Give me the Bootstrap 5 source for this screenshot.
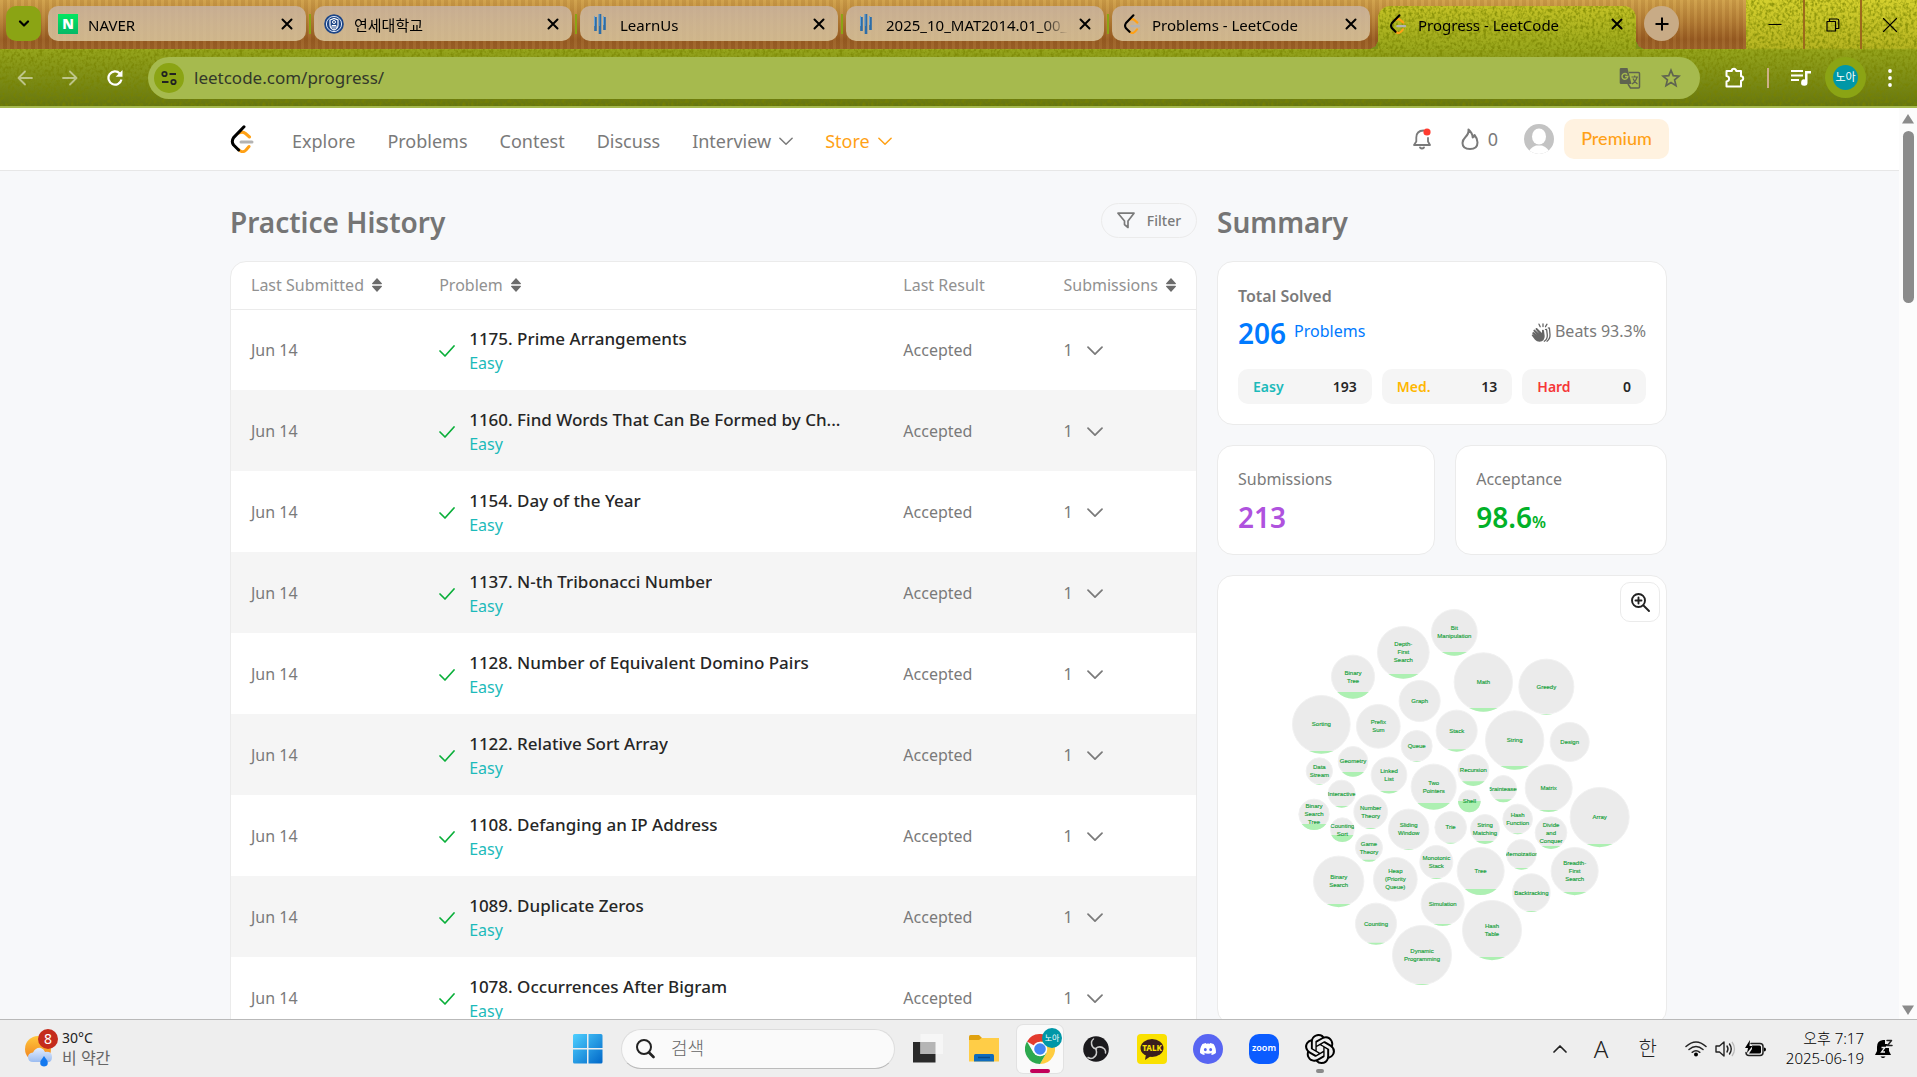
<!DOCTYPE html>
<html lang="en">
<head>
<meta charset="utf-8">
<meta name="viewport" content="width=device-width, initial-scale=1">
<title>Progress - LeetCode</title>
<link href="https://cdn.jsdelivr.net/npm/bootstrap@5.3.0/dist/css/bootstrap.min.css" rel="stylesheet">
<style>
  :root { --ui: "Noto Sans", "Noto Sans CJK KR", sans-serif; --olive: #8ba414; --lime: #a6ba4e; --gray: #7a7a7a; --line: #ebebeb;
    --grain: url("data:image/svg+xml,%3Csvg xmlns='http://www.w3.org/2000/svg' width='200' height='106'%3E%3Cfilter id='n'%3E%3CfeTurbulence type='fractalNoise' baseFrequency='.35 .3' numOctaves='2' stitchTiles='stitch'/%3E%3CfeColorMatrix values='0 0 0 0 .18 0 0 0 0 .22 0 0 0 0 0 0 0 0 -3 1.75'/%3E%3C/filter%3E%3Crect width='200' height='106' filter='url(%23n)' opacity='.7'/%3E%3C/svg%3E"); }
  body { font-family: var(--ui); font-size: 16px; line-height: 25px; font-weight: 400; color: var(--gray); background: #f7f8fa; }
  svg { display: block; flex: none; }
  button { font: inherit; color: inherit; background: none; border: 0; padding: 0; }
  a { color: inherit; text-decoration: none; }
  .ln { fill: none; stroke: currentColor; stroke-linecap: round; stroke-linejoin: round; }

  /* browser frame */
  .frame { height: 108px; color: #000; border-bottom: 2px solid var(--lime);
    background: var(--grain), linear-gradient(#d4d02e, #b6b422 48px, #95a41c 50px, #66760f 106px); }
  .strip { height: 49px; }
  .wood { padding: 6px 58px 0 6px; gap: 7px; background: repeating-linear-gradient(90deg, rgba(255,230,160,.06) 0 3px, rgba(80,30,0,.07) 3px 7px), linear-gradient(#cfa04a, #b37c34 45%, #985c22 80%, #9d6229); }
  .tab-btn { width: 35px; height: 35px; border-radius: 10px; background: var(--olive); }
  .tabs { gap: 8px; min-width: 0; }
  .b-tab { position: relative; flex: 0 1 258px; min-width: 0; height: 35px; gap: 10px; padding: 0 12px 0 10px; border-radius: 10px; line-height: 22px; background: linear-gradient(rgba(200,178,160,.85), rgba(222,205,165,.8)); }
  .b-tab:not(.on)::after { content: ""; position: absolute; right: -5px; top: 8px; width: 2px; height: 20px; background: var(--olive); }
  .b-tab:nth-child(5)::after { display: none; }
  .b-tab span { flex: 1; min-width: 0; white-space: nowrap; overflow: hidden; padding-top: 3px; font-size: 15px; -webkit-mask: linear-gradient(90deg, #000 85%, transparent); mask: linear-gradient(90deg, #000 85%, transparent); }
  .b-tab.on { height: 43px; padding-bottom: 8px; border-radius: 12px 12px 0 0; background: var(--grain), linear-gradient(#c4c226, #98a61c); }
  .b-tab.on::before, .b-tab.on::after { content: ""; position: absolute; bottom: 0; width: 10px; height: 10px; }
  .b-tab.on::before { left: -10px; background: radial-gradient(circle at 0 0, transparent 10px, #7e8e18 10px); }
  .b-tab.on::after { right: -10px; background: radial-gradient(circle at 100% 0, transparent 10px, #7e8e18 10px); }
  .plus-btn { width: 35px; height: 35px; border-radius: 50%; background: #c8ab86; }
  .win-btn { width: 57px; height: 49px; border-left: 2px solid #9c6a1c; }
  .win-btn:first-child { border-left: 0; }
  .favicon-n { width: 20px; height: 20px; background: linear-gradient(#03e860, #05b867); color: #fff; font: 900 14px/20px "Noto Sans", sans-serif; text-align: center; flex: none; }
  .tools { height: 57px; padding: 0 25px 0 7px; color: #fff; }
  .nav-ic { width: 36px; height: 36px; margin-right: 9px; }
  .dim { opacity: .5; }
  .omni { height: 42px; border-radius: 21px; background: var(--lime); margin: 0 25px 0 6px; padding: 0 19px 0 6px; color: #555a4c; }
  .site-ic { width: 30px; height: 30px; border-radius: 50%; background: var(--olive); color: #222; }
  .omni input { flex: 1; min-width: 0; border: 0; outline: 0; background: none; font-size: 17px; color: #33382a; padding: 0 0 0 10px; }
  .tool-sep { width: 2px; height: 20px; background: #cdb088; margin: 0 22px; }
  .profile { width: 41px; height: 41px; border-radius: 50%; background: var(--olive); margin: 0 22px 0 14px; }
  .profile span { width: 25px; height: 25px; border-radius: 50%; background: #0097a7; color: #fff; font-size: 11px; line-height: 24px; }

  /* site */
  .site-wrap { max-width: 1439px; margin: 0 auto; padding-right: 2px; }
  .site-head { height: 63px; background: #fff; border-bottom: 1px solid #e7e7e7; font-size: 18px; }
  .site-nav { gap: 32px; margin-left: 38px; }
  .site-nav a { gap: 8px; }
  .head-ic { margin-right: 26px; }
  .face { margin-right: 10px; }
  .premium { width: 105px; height: 40px; border-radius: 10px; background: #fff2e0; color: #ffa116; font: 500 18px/38px Lato, sans-serif; text-align: center; margin-right: -2px; }
  h1, h2 { font-size: 28px; line-height: 35px; font-weight: 600; margin: 0; padding-top: 4px; color: #757575; }
  .top-row { height: 35px; margin: 32px 0 23px; }
  .filter-btn { width: 96px; height: 35px; border: 1px solid var(--line); border-radius: 18px; font-size: 14px; font-weight: 500; gap: 12px; }
  .panel { background: #fff; border: 1px solid var(--line); border-radius: 16px; }
  .hist { table-layout: fixed; width: 100%; margin: 0; }
  .hist th { height: 47px; padding: 0 0 0 20px; font-weight: 400; color: #919191; border-bottom: 1px solid var(--line); }
  .hist td { height: 81px; padding: 2px 0 0 20px; vertical-align: middle; }
  .hist tbody tr:nth-child(even) { background: #f5f5f5; }
  .c1 { width: 19.5%; } .c2 { width: 48.1%; } .c3 { width: 16.6%; }
  .gap-in { gap: 14px; }
  .p-title { color: #262626; font-size: 17px; font-weight: 500; }
  .easy { color: #1cbaba; } .med { color: #ffb700; } .hard { color: #f63737; }
  .side { width: 450px; gap: 20px; }
  .stat { padding: 21px 20px 19px; }
  .solved { padding: 22px 20px 20px; margin-top: 3px; }
  .big { font-size: 28px; line-height: 36px; font-weight: 600; }
  .stat .big { margin-top: 7px; }
  .big small { font-size: 16px; line-height: 16px; font-weight: 600; }
  .total-row { margin: 6px 0 18px; line-height: 32px; }
  .chip { height: 35px; border-radius: 10px; background: #f5f5f5; padding: 0 15px; font-size: 14px; font-weight: 600; }
  .chip b { font-weight: 600; color: #262626; }
  .zoom-btn { position: absolute; top: 6px; right: 6px; width: 40px; height: 40px; border: 1px solid var(--line); border-radius: 10px; background: #fff; color: #222; }
  .bubbles text { font: 6px "Liberation Sans", sans-serif; fill: #14a038; stroke: #14a038; stroke-width: .15px; text-anchor: middle; }
  .scroll-col { width: 18px; background: #fcfcfc; color: #8b8b8b; padding: 6px 0 4px; }
  .thumb { width: 11px; height: 172px; border-radius: 6px; background: #8b8b8b; margin-top: 7px; }

  /* taskbar */
  .taskbar { height: 58px; background: #eee; border-top: 1px solid #b9b9b9; color: #222; }
  .side-part { flex: 1 1 0; }
  .t-item { width: 46px; height: 48px; position: relative; }
  .mid { gap: 10px; padding-right: 9px; }
  .t-search { width: 274px; height: 40px; border-radius: 20px; border: 1px solid #ddd; border-bottom-color: #bbb; background: #fafafa; padding: 0 14px; gap: 14px; }
  .t-search input { width: 100%; border: 0; outline: 0; background: none; font-size: 18px; font-weight: 300; }
  .t-search input::placeholder { color: #666; opacity: 1; }
  .running { background: #fafafa; border-radius: 6px; box-shadow: 0 0 0 1px #e2e2e2; }
  .bar-mark { position: absolute; bottom: 0; height: 4px; border-radius: 2px; }
  .tiny-badge { position: absolute; width: 20px; height: 20px; border-radius: 50%; color: #fff; text-align: center; line-height: 20px; }
  .b-alert { top: 0; right: 0; background: #c42b1c; font-size: 14px; }
  .b-user { top: 3px; right: 1px; background: #0097a7; font-size: 8px; }
  .kakao { width: 30px; height: 30px; border-radius: 4px; background: #fae100; position: relative; }
  .kakao span { position: absolute; left: 0; right: 0; top: 9px; text-align: center; color: #fae100; font: 800 8px/10px "Noto Sans", sans-serif; }
  .zoomer { width: 30px; height: 30px; border-radius: 10px; background: #0b5cff; color: #fff; font: 600 9px/28px "Noto Sans", sans-serif; text-align: center; }
  .weather { font-size: 14px; line-height: 20px; padding-bottom: 2px; }
  .weather .sky { font-size: 16px; color: #666; }
  .clock { font-size: 15px; line-height: 20px; font-weight: 300; color: #000; margin: 0 11px 0 20px; padding-bottom: 2px; }
  .ime { font-size: 20px; font-weight: 300; margin: 0 28px 0 30px; }
  .ime-a { font-size: 24px; font-weight: 300; margin-left: 27px; }
</style>
</head>
<body class="vh-100 d-flex flex-column overflow-hidden">

<svg width="0" height="0" class="position-absolute">
  <symbol id="x" viewBox="0 0 14 14"><path class="ln" stroke-width="2" d="M2.500 2.500l9 9m0-9l-9 9"/></symbol>
  <symbol id="leet" viewBox="0 0 24 28"><path class="ln" style="stroke:#b3b3b3" stroke-width="3" d="M11 17h11"/><path class="ln" style="stroke:#ffa116" stroke-width="3" d="M9 8q3.500-2 6.500.500l4 3.500M8.500 24.500q4 4 7.500.500l3-3.500"/><path class="ln" style="stroke:#000" stroke-width="3" d="M14 1.800L3.600 12.600q-2.600 4 0 7.400l5 5"/></symbol>
  <symbol id="bars" viewBox="0 0 20 20"><path stroke="#2c6da8" stroke-width="2.600" d="M5.500 3v14M10 0v20M14.500 3v13"/><path stroke="#6aa3d4" stroke-width="1" d="M4.500 2v10M9 0v12M13.500 2v9"/></symbol>
  <symbol id="down" viewBox="0 0 16 10"><path class="ln" stroke-width="1.700" d="M1 1.200l7 7 7-7"/></symbol>
  <symbol id="sort" viewBox="0 0 10 14"><path fill="#6b6b6b" d="M5 0l5 5.500q0 .700-.700.700H.700Q0 6.200 0 5.500zM5 14l5-5.500q0-.700-.700-.700H.700q-.700 0-.700.700z"/></symbol>
  <symbol id="tick" viewBox="0 0 16 12"><path class="ln" style="stroke:#0aaf3a" stroke-width="1.700" d="M1 6l5 5L15 1"/></symbol>
</svg>

<header class="frame flex-shrink-0">
  <div class="strip d-flex">
    <div class="wood d-flex flex-grow-1 overflow-hidden">
      <button class="tab-btn d-flex align-items-center justify-content-center flex-shrink-0" aria-label="Search tabs"><svg width="12" height="8" viewBox="0 0 12 8"><path class="ln" stroke-width="2.200" d="M2 1.500l4 4 4-4"/></svg></button>
      <div class="tabs d-flex flex-grow-1">
        <div class="b-tab d-flex align-items-center"><div class="favicon-n">N</div><span>NAVER</span><button aria-label="Close"><svg width="14" height="14"><use href="#x"/></svg></button></div>
        <div class="b-tab d-flex align-items-center"><svg width="20" height="20" viewBox="0 0 20 20"><circle cx="10" cy="10" r="9.800" fill="#1c4587"/><circle cx="10" cy="10" r="7.600" fill="none" stroke="#dbe5f5" stroke-width="1"/><path d="M6 6l4-1.500L14 6v5q0 3.500-4 5-4-1.500-4-5z" fill="none" stroke="#fff" stroke-width="1.200"/><circle cx="10" cy="8" r="1.500" fill="none" stroke="#fff"/><path d="M8 14v-2.500h4V14M10 11.500V15" stroke="#fff" fill="none"/></svg><span>연세대학교</span><button aria-label="Close"><svg width="14" height="14"><use href="#x"/></svg></button></div>
        <div class="b-tab d-flex align-items-center"><svg width="20" height="20"><use href="#bars"/></svg><span>LearnUs</span><button aria-label="Close"><svg width="14" height="14"><use href="#x"/></svg></button></div>
        <div class="b-tab d-flex align-items-center"><svg width="20" height="20"><use href="#bars"/></svg><span>2025_10_MAT2014.01_00_l</span><button aria-label="Close"><svg width="14" height="14"><use href="#x"/></svg></button></div>
        <div class="b-tab d-flex align-items-center"><svg width="20" height="20"><use href="#leet"/></svg><span>Problems - LeetCode</span><button aria-label="Close"><svg width="14" height="14"><use href="#x"/></svg></button></div>
        <div class="b-tab on d-flex align-items-center"><svg width="20" height="20"><use href="#leet"/></svg><span>Progress - LeetCode</span><button aria-label="Close"><svg width="14" height="14"><use href="#x"/></svg></button></div>
        <button class="plus-btn d-flex align-items-center justify-content-center flex-shrink-0" aria-label="New tab"><svg width="14" height="14" viewBox="0 0 14 14"><path stroke="#000" stroke-width="2" d="M7 .500v13M.500 7h13"/></svg></button>
      </div>
    </div>
    <div class="d-flex flex-shrink-0">
      <button class="win-btn d-flex align-items-center justify-content-center" aria-label="Minimize"><svg width="14" height="14" viewBox="0 0 14 14"><path stroke="#000" d="M.500 6.500h13"/></svg></button>
      <button class="win-btn d-flex align-items-center justify-content-center" aria-label="Restore"><svg width="14" height="14" viewBox="0 0 14 14"><path class="ln" stroke-width="1.200" d="M1 3.500h8.500V13H1zM3.500 3.500V1H11q1.800 0 1.800 1.800v7.700H9.500"/></svg></button>
      <button class="win-btn d-flex align-items-center justify-content-center" aria-label="Close window"><svg width="14" height="14" viewBox="0 0 14 14"><path class="ln" stroke-width="1.100" d="M.500.500l13 13m0-13l-13 13"/></svg></button>
    </div>
  </div>
  <div class="tools d-flex align-items-center">
    <button class="nav-ic dim d-flex align-items-center justify-content-center" aria-label="Back"><svg width="16" height="16" viewBox="0 0 16 16"><path class="ln" stroke-width="1.800" d="M15 8H1.500M8 1.500L1.500 8 8 14.500"/></svg></button>
    <button class="nav-ic dim d-flex align-items-center justify-content-center" aria-label="Forward"><svg width="16" height="16" viewBox="0 0 16 16"><path class="ln" stroke-width="1.800" d="M1 8h13.500M8 1.500L14.500 8 8 14.500"/></svg></button>
    <button class="nav-ic d-flex align-items-center justify-content-center" aria-label="Reload"><svg width="16" height="16" viewBox="0 0 16 16"><path fill="none" stroke="#fff" stroke-width="2.200" d="M14.500 9.500A6.600 6.600 0 1 1 12.800 3.400L14 5"/><path fill="#fff" d="M15.500 0v6.800H8.700z"/></svg></button>
    <div class="omni d-flex align-items-center flex-grow-1">
      <button class="site-ic d-flex align-items-center justify-content-center" aria-label="Site information"><svg width="16" height="16" viewBox="0 0 16 16"><g fill="none" stroke="#222" stroke-width="1.800"><circle cx="3.500" cy="4" r="2.200"/><path d="M8.500 4H15M1 12h6.500"/><circle cx="12.500" cy="12" r="2.200"/></g></svg></button>
      <input type="text" value="leetcode.com/progress/" aria-label="Address">
      <button style="margin-right:20px" aria-label="Translate"><svg width="22" height="22" viewBox="0 0 22 22"><path fill="none" stroke="#5f6350" stroke-width="1.500" d="M10 5.500h9.500q1 0 1 1V20q0 1-1 1h-8L9 17"/><path fill="#5f6350" d="M2 1h6.500l4 16H2q-1.300 0-1.300-1.300V2.300Q.700 1 2 1z"/><path fill="none" stroke="#a6ba4e" stroke-width="1.400" d="M8.200 7.600A2.900 2.900 0 1 0 8.800 9.500H6"/><path fill="none" stroke="#5f6350" stroke-width="1.200" d="M12.500 10h6.500M15.700 8.500V10M18 10q-1 4.500-5 7M14 11.500q1 3 4.500 5.500"/></svg></button>
      <button aria-label="Bookmark"><svg width="20" height="20" viewBox="0 0 20 20"><path fill="none" stroke="#5f6350" stroke-width="1.700" d="M10 2.200l2.200 5.400 5.900.500-4.500 3.800 1.400 5.700L10 14.500l-5 3.100 1.400-5.700L1.900 8.100l5.900-.500z"/></svg></button>
    </div>
    <button aria-label="Extensions"><svg width="20" height="21" viewBox="0 0 20 21"><path fill="none" stroke="#fff" stroke-width="2" stroke-linejoin="round" d="M1.500 4h5.300a2.200 2.200 0 1 1 4.400 0H16v5.300a2.200 2.200 0 0 1 0 4.400V19.500H1.500v-5q2.600-.400 2.600-2.800T1.500 9z"/></svg></button>
    <div class="tool-sep"></div>
    <button aria-label="Media"><svg width="20" height="18" viewBox="0 0 20 18"><path stroke="#fff" stroke-width="2" d="M0 2h12M0 6.500h12M0 11h8"/><path fill="#fff" d="M14 2h6v2.500h-3.500v9a3.200 3.200 0 1 1-2.500-3z"/></svg></button>
    <button class="profile d-flex align-items-center justify-content-center flex-shrink-0"><span>노아</span></button>
    <button aria-label="Menu"><svg width="4" height="18" viewBox="0 0 4 18"><g fill="#fff"><circle cx="2" cy="2" r="1.900"/><circle cx="2" cy="9" r="1.900"/><circle cx="2" cy="16" r="1.900"/></g></svg></button>
  </div>
</header>

<div class="d-flex flex-grow-1 overflow-hidden">
  <div class="flex-grow-1 overflow-hidden">
    <div class="site-head">
      <div class="site-wrap h-100 d-flex align-items-center">
        <a href="#" aria-label="LeetCode"><svg width="24" height="28"><use href="#leet"/></svg></a>
        <nav class="site-nav d-flex pt-1">
          <a href="#">Explore</a><a href="#">Problems</a><a href="#">Contest</a><a href="#">Discuss</a>
          <a href="#" class="d-flex align-items-center">Interview<svg width="14" height="9"><use href="#down"/></svg></a>
          <a href="#" class="d-flex align-items-center" style="color:#ffa116">Store<svg width="14" height="9"><use href="#down"/></svg></a>
        </nav>
        <div class="ms-auto d-flex align-items-center">
          <button class="head-ic" aria-label="Notifications"><svg width="21" height="22" viewBox="0 0 21 22"><path class="ln" stroke-width="1.800" d="M11.500 2.500Q4.300 2.800 4.300 9.500v4L2 17h16l-2-3.500V10M8 19.500q2 2 4 0"/><circle cx="15" cy="4" r="3.600" fill="#ff3b30"/></svg></button>
          <button class="head-ic d-flex align-items-center" style="gap:7px"><svg width="22" height="22" viewBox="0 0 22 22"><path class="ln" stroke-width="2" d="M9.500 1.500q.500 4-3 7.500-3 3-3 6 0 6 7.500 6t7.500-6.500q0-4-3-7.500-.500 2-1.800 2.500Q13.500 5 9.500 1.500z"/></svg>0</button>
          <svg class="face" width="30" height="30" viewBox="0 0 30 30"><defs><clipPath id="av"><circle cx="15" cy="15" r="15"/></clipPath></defs><g clip-path="url(#av)"><path fill="#c3c3c3" d="M0 0h30v30H0z"/><ellipse cx="15" cy="12.500" rx="7" ry="8" fill="#fff"/><path fill="#fff" d="M4 30q1-6 8-8.500h6q7 2.500 8 8.500z"/></g></svg>
          <a href="#" class="premium">Premium</a>
        </div>
      </div>
    </div>

    <main class="site-wrap d-flex" style="gap:20px">
      <section class="flex-grow-1">
        <div class="top-row d-flex align-items-center justify-content-between">
          <h1>Practice History</h1>
          <button class="filter-btn d-flex align-items-center justify-content-center"><svg width="18" height="17" viewBox="0 0 18 17"><path class="ln" stroke-width="1.700" d="M1 1.200h16L11 9v6.500l-3.500-3V9z"/></svg>Filter</button>
        </div>
        <div class="panel overflow-hidden">
          <table class="hist">
            <thead><tr>
              <th class="c1" scope="col"><span class="d-flex align-items-center">Last Submitted<svg class="ms-2" width="10" height="14"><use href="#sort"/></svg></span></th>
              <th class="c2" scope="col"><span class="d-flex align-items-center">Problem<svg class="ms-2" width="10" height="14"><use href="#sort"/></svg></span></th>
              <th class="c3" scope="col">Last Result</th>
              <th scope="col"><span class="d-flex align-items-center">Submissions<svg class="ms-2" width="10" height="14"><use href="#sort"/></svg></span></th>
            </tr></thead>
            <tbody id="rows"></tbody>
          </table>
        </div>
      </section>

      <aside class="side d-flex flex-column flex-shrink-0">
        <div class="top-row mb-0 d-flex align-items-center"><h2>Summary</h2></div>
        <div class="panel solved">
          <div class="fw-semibold">Total Solved</div>
          <div class="total-row d-flex align-items-start">
            <span class="big" style="color:#007aff">206</span><span class="ms-2" style="color:#007aff">Problems</span>
            <svg class="ms-auto me-1 mt-2" width="20" height="20" viewBox="0 0 20 20"><path fill="#666" d="M1.500 9.500q.900-1 1.800 0l2.700 2.500-3.600-4q-.300-1.500 1.100-1.500L8 10.500 4.500 6.300q0-1.500 1.400-1.300l5.100 5V7q1.700-.900 2 .800l.700 5.200q0 5.500-5.200 5.800-2.700 0-4.500-2L.800 12.600Q.400 11.200 1.800 11.500L4 13 1.300 10.700z"/><path class="ln" style="stroke:#666" stroke-width="1.300" d="M14.500 6.500q1-.500 1.200.700l.600 5q.200 4-3 6M17.300 5q1-.500 1.200.700l.500 6q.200 4-3 6.500M8 1.200l1.200 2.500M12 .800v2.700M16 1.200l-1.500 2.500"/></svg>
            <span>Beats 93.3%</span>
          </div>
          <div class="d-flex" style="gap:10px">
            <div class="chip d-flex align-items-center justify-content-between easy" style="flex:135 1 0">Easy<b>193</b></div>
            <div class="chip d-flex align-items-center justify-content-between med" style="flex:131 1 0">Med.<b>13</b></div>
            <div class="chip d-flex align-items-center justify-content-between hard" style="flex:122 1 0">Hard<b>0</b></div>
          </div>
        </div>
        <div class="d-flex" style="gap:20px">
          <div class="panel stat" style="flex:219 1 0">Submissions<div class="big" style="color:#af52de">213</div></div>
          <div class="panel stat" style="flex:211 1 0">Acceptance<div class="big" style="color:#02b128">98.6<small>%</small></div></div>
        </div>
        <div class="panel position-relative">
          <svg class="bubbles w-100" viewBox="0 0 448 448" id="bubbles"></svg>
          <button class="zoom-btn d-flex align-items-center justify-content-center" aria-label="Zoom in"><svg width="19" height="19" viewBox="0 0 19 19"><path class="ln" stroke-width="1.900" d="M12.500 12.500L18 18M7.500 4.500v6M4.500 7.500h6"/><circle class="ln" cx="7.500" cy="7.500" r="6.500" stroke-width="1.900"/></svg></button>
        </div>
      </aside>
    </main>
  </div>
  <div class="scroll-col d-flex flex-column align-items-center flex-shrink-0">
    <svg width="12" height="10" viewBox="0 0 12 10"><path fill="currentColor" d="M6 0l6 9.500H0z"/></svg>
    <div class="thumb"></div>
    <svg class="mt-auto" width="12" height="10" viewBox="0 0 12 10"><path fill="currentColor" d="M6 10L12 .500H0z"/></svg>
  </div>
</div>

<footer class="taskbar d-flex align-items-center flex-shrink-0">
  <div class="side-part d-flex align-items-center ps-4 weather">
    <div class="position-relative me-1">
      <svg width="34" height="38" viewBox="0 0 34 38"><defs><linearGradient id="sun" x1="0" y1="0" x2="0" y2="1"><stop stop-color="#ffc83d"/><stop offset="1" stop-color="#ef7a1a"/></linearGradient><linearGradient id="cl" x1="0" y1="0" x2="0" y2="1"><stop stop-color="#e3edff"/><stop offset="1" stop-color="#9bbcf0"/></linearGradient></defs><circle cx="14" cy="20" r="13" fill="url(#sun)"/><path fill="url(#cl)" d="M9 33q-5 0-5-5 0-4 5-4.500Q12 18 17 19q3 1 4 4 7-1 7 5t-5 5z"/><path fill="#1479ef" d="M20 27l3.500 5q1.500 5-3.500 5.500-5-.500-3.500-5.500z"/></svg>
      <span class="tiny-badge b-alert">8</span>
    </div>
    <div><div>30°C</div><div class="sky">비 약간</div></div>
  </div>
  <div class="mid d-flex align-items-center">
    <button class="t-item d-flex align-items-center justify-content-center" aria-label="Start"><svg width="30" height="30" viewBox="0 0 30 30"><defs><linearGradient id="w" x1="0" y1="0" x2="1" y2="1"><stop stop-color="#4fd0ff"/><stop offset="1" stop-color="#0067c8"/></linearGradient></defs><path fill="url(#w)" d="M1.500 0H14v14H0V1.500Q0 0 1.500 0zM15.500 0H28q1.500 0 1.500 1.500V14h-14zM0 15.500h14v14H1.500Q0 29.500 0 28zM15.500 15.500h14V28q0 1.500-1.500 1.500H15.500z"/></svg></button>
    <div class="t-search d-flex align-items-center"><svg width="19" height="20" viewBox="0 0 19 20"><circle class="ln" cx="8" cy="8" r="7" stroke-width="2"/><path class="ln" stroke-width="2.600" d="M13 13.500l4.500 4.500"/></svg><input type="search" placeholder="검색" aria-label="검색"></div>
    <button class="t-item d-flex align-items-center justify-content-center" aria-label="Task view"><svg width="30" height="29" viewBox="0 0 30 29"><path fill="#2a2a2a" d="M0 8h22.500v20.500H0z"/><path fill="#f6f6f6" d="M7.500 0H30v20H7.500z"/><path fill="#b5b5b5" d="M7.500 8h15v12h-15z"/></svg></button>
    <button class="t-item d-flex align-items-center justify-content-center" aria-label="Files"><svg width="30" height="27" viewBox="0 0 30 27"><path fill="#e0a10f" d="M0 1.500Q0 0 1.500 0H10l3 3v6H0z"/><path fill="#ffcd47" d="M0 5h10l2.500-2H30v23.500H0z"/><path fill="#0f6cbd" d="M5 26.500V20.500Q5 19 6.500 19h17q1.500 0 1.500 1.500v6z"/><path stroke="#0a4a86" stroke-width="1.500" d="M9 22.500h12"/></svg></button>
    <button class="t-item running d-flex align-items-center justify-content-center" aria-label="Chrome"><svg width="30" height="30" viewBox="0 0 30 30"><path fill="#e33b2e" d="M15 15L2 7.500A15 15 0 0 1 28 7.500z"/><path fill="#ffcd40" d="M28 7.500A15 15 0 0 1 15 30l6.500-11.250L15 7.500z"/><path fill="#2da94f" d="M15 30A15 15 0 0 1 2 7.500l6.500 11.250L15 15l6.500 3.750z"/><circle cx="15" cy="15" r="7.300" fill="#fff"/><circle cx="15" cy="15" r="5.800" fill="#4285f4"/></svg><span class="tiny-badge b-user">노아</span><i class="bar-mark" style="width:20px;background:#c2005a"></i></button>
    <button class="t-item d-flex align-items-center justify-content-center" aria-label="OBS"><svg width="26" height="26" viewBox="0 0 26 26"><circle cx="13" cy="13" r="12.800" fill="#1b1a1d"/><g class="ln" style="stroke:#ccc" stroke-width="1.500"><path d="M13.500 13q-5.500-1-5-7 .500-2 2-3"/><path d="M12.500 12.500q4.500-3.500 9 .500 1.500 2 1 4"/><path d="M13 13.500q2 5.500-3 8.500-2.500 1-5-.500"/></g></svg></button>
    <button class="t-item d-flex align-items-center justify-content-center" aria-label="KakaoTalk"><div class="kakao"><svg width="30" height="30" viewBox="0 0 30 30"><ellipse cx="15" cy="14" rx="11.500" ry="9" fill="#3b1e1e"/><path fill="#3b1e1e" d="M9 20l-1 6 6-4z"/></svg><span>TALK</span></div></button>
    <button class="t-item d-flex align-items-center justify-content-center" aria-label="Discord"><svg width="30" height="30" viewBox="0 0 30 30"><circle cx="15" cy="15" r="15" fill="#5865f2"/><path transform="translate(7 7)" fill="#fff" d="M13.545 2.907a13.227 13.227 0 0 0-3.257-1.011.05.05 0 0 0-.052.025c-.141.25-.297.577-.406.833a12.190 12.190 0 0 0-3.658 0 8.258 8.258 0 0 0-.412-.833.051.051 0 0 0-.052-.025c-1.125.194-2.220.534-3.257 1.011a.041.041 0 0 0-.021.018C.356 6.024-.213 9.047.066 12.032c.001.014.010.028.021.037a13.276 13.276 0 0 0 3.995 2.020.05.05 0 0 0 .056-.019c.308-.420.582-.863.818-1.329a.05.05 0 0 0-.010-.059 8.875 8.875 0 0 1-1.266-.606.05.05 0 0 1-.005-.085c.084-.063.168-.129.248-.195a.05.05 0 0 1 .051-.007c2.619 1.196 5.454 1.196 8.041 0a.052.052 0 0 1 .053.007c.080.066.164.132.248.195a.051.051 0 0 1-.004.085 8.254 8.254 0 0 1-1.249.594.05.05 0 0 0-.027.071c.240.465.515.909.817 1.329a.05.05 0 0 0 .056.019 13.235 13.235 0 0 0 4.001-2.020.049.049 0 0 0 .021-.037c.334-3.451-.559-6.449-2.366-9.106a.034.034 0 0 0-.020-.019Zm-8.198 7.307c-.789 0-1.438-.724-1.438-1.612 0-.889.637-1.613 1.438-1.613.807 0 1.450.730 1.438 1.613 0 .888-.637 1.612-1.438 1.612Zm5.316 0c-.788 0-1.438-.724-1.438-1.612 0-.889.637-1.613 1.438-1.613.807 0 1.451.730 1.438 1.613 0 .888-.631 1.612-1.438 1.612Z"/></svg></button>
    <button class="t-item d-flex align-items-center justify-content-center" aria-label="Zoom"><div class="zoomer">zoom</div></button>
    <button class="t-item d-flex align-items-center justify-content-center" aria-label="ChatGPT"><svg width="30" height="30" viewBox="0 0 24 24"><path d="M22.2819 9.8211a5.9847 5.9847 0 0 0-.5157-4.9108 6.0462 6.0462 0 0 0-6.5098-2.9A6.0651 6.0651 0 0 0 4.9807 4.1818a5.9847 5.9847 0 0 0-3.9977 2.9 6.0462 6.0462 0 0 0 .7427 7.0966 5.98 5.98 0 0 0 .511 4.9107 6.051 6.051 0 0 0 6.5146 2.9001A5.9847 5.9847 0 0 0 13.2599 24a6.0557 6.0557 0 0 0 5.7718-4.2058 5.9894 5.9894 0 0 0 3.9977-2.9001 6.0557 6.0557 0 0 0-.7475-7.0729zm-9.022 12.6081a4.4755 4.4755 0 0 1-2.8764-1.0408l.1419-.0804 4.7783-2.7582a.7948.7948 0 0 0 .3927-.6813v-6.7369l2.02 1.1686a.071.071 0 0 1 .038.052v5.5826a4.504 4.504 0 0 1-4.4945 4.4944zm-9.6607-4.1254a4.4708 4.4708 0 0 1-.5346-3.0137l.142.0852 4.783 2.7582a.7712.7712 0 0 0 .7806 0l5.8428-3.3685v2.3324a.0804.0804 0 0 1-.0332.0615L9.74 19.9502a4.4992 4.4992 0 0 1-6.1408-1.6464zM2.3408 7.8956a4.485 4.485 0 0 1 2.3655-1.9728V11.6a.7664.7664 0 0 0 .3879.6765l5.8144 3.3543-2.0201 1.1685a.0757.0757 0 0 1-.071 0l-4.8303-2.7865A4.504 4.504 0 0 1 2.3408 7.872zm16.5963 3.8558L13.1038 8.364 15.1192 7.2a.0757.0757 0 0 1 .071 0l4.8303 2.7913a4.4944 4.4944 0 0 1-.6765 8.1042v-5.6772a.79.79 0 0 0-.407-.667zm2.0107-3.0231l-.142-.0852-4.7735-2.7818a.7759.7759 0 0 0-.7854 0L9.409 9.2297V6.8974a.0662.0662 0 0 1 .0284-.0615l4.8303-2.7866a4.4992 4.4992 0 0 1 6.6802 4.66zM8.3065 12.863l-2.02-1.1638a.0804.0804 0 0 1-.038-.0567V6.0742a4.4992 4.4992 0 0 1 7.3757-3.4537l-.142.0805L8.704 5.459a.7948.7948 0 0 0-.3927.6813zm1.0976-2.3654l2.602-1.4998 2.6069 1.4998v2.9994l-2.5974 1.4997-2.6067-1.4997Z"/></svg><i class="bar-mark" style="width:8px;background:#8a8a8a"></i></button>
  </div>
  <div class="side-part d-flex align-items-center justify-content-end pe-4">
    <button aria-label="Hidden icons"><svg width="14" height="8" viewBox="0 0 14 8"><path class="ln" stroke-width="1.700" d="M1 7l6-6 6 6"/></svg></button>
    <button class="ime-a">A</button>
    <button class="ime">한</button>
    <svg width="22" height="17" viewBox="0 0 22 17"><g class="ln" stroke-width="1.500"><path d="M1 6.500q10-9 20 0M4 9.500q7-6 14 0M7.200 12.300q3.800-3 7.600 0"/></g><circle cx="11" cy="14.500" r="2"/></svg>
    <svg class="ms-2" width="22" height="18" viewBox="0 0 22 18"><path class="ln" stroke-width="1.400" d="M1 6h3.500L9 2v14l-4.500-4H1zM12 6q2 3 0 6M14.500 4q3.500 5 0 10"/><path fill="none" stroke="#bbb" stroke-width="1.300" d="M17 2q5 7 0 14"/></svg>
    <svg class="ms-2" width="21" height="18" viewBox="0 0 21 18"><path class="ln" stroke-width="1.500" d="M6 3.500h9q3 0 3 3v6q0 3-3 3H4q-3 0-3-3"/><path d="M7 5.500h7.500q1.500 0 1.500 1.500v5q0 1.500-1.500 1.500H4L7 9zM19 7.500q2 0 2 2t-2 2zM5 0L0 8h3l-1 5 5.500-7H4.500z"/></svg>
    <div class="clock text-end"><div>오후 7:17</div><div>2025-06-19</div></div>
    <svg width="18" height="20" viewBox="0 0 18 20"><path d="M8 1q-6 .500-6 7v4L0 16h16l-2-4V9h-4l3-4h-3V1zM5.500 17.500h5q-2.500 3-5 0z"/><path stroke="#eee" fill="none" stroke-width="1.300" d="M6.500 8.500H10L6.500 13H10"/><path class="ln" stroke-width="1.500" d="M12 1.500h4.500L12.500 6.500H17"/></svg>
  </div>
</footer>

<script src="https://cdn.jsdelivr.net/npm/bootstrap@5.3.0/dist/js/bootstrap.bundle.min.js"></script>
<script>
const problems = ["1175. Prime Arrangements", "1160. Find Words That Can Be Formed by Ch...", "1154. Day of the Year", "1137. N-th Tribonacci Number", "1128. Number of Equivalent Domino Pairs", "1122. Relative Sort Array", "1108. Defanging an IP Address", "1089. Duplicate Zeros", "1078. Occurrences After Bigram"];
document.getElementById("rows").innerHTML = problems.map(p => `<tr><td>Jun 14</td>
  <td><div class="d-flex align-items-center gap-in"><svg width="16" height="12"><use href="#tick"/></svg><div style="min-width:0"><a href="#" class="p-title d-block text-truncate">${p}</a><div class="easy">Easy</div></div></div></td>
  <td>Accepted</td>
  <td><button class="d-flex align-items-center gap-in">1<svg width="16" height="10"><use href="#down"/></svg></button></td></tr>`).join("");

// topic bubbles: label, centre x, centre y, radius, height of the solved part (thirds of a pixel)
const topics = [
  ["Bit|Manipulation",553,187,70,11],["Depth-|First|Search",400,247,79,14],["Binary|Tree",249,320,66,20],["Graph",449,393,63,0],
  ["Math",640,336,89,11],["Greedy",829,350,84,2],["Sorting",154,463,88,8],["Prefix|Sum",325,469,67,0],["Stack",560,482,63,7],
  ["String",734,510,89,11],["Design",899,516,60,0],["Queue",440,528,48,2],["Geometry",249,574,46,14],["Data|Stream",148,603,41,2],
  ["Linked|List",357,615,55,7],["Two|Pointers",491,650,69,20],["Recursion",610,600,48,14],["Brainteaser",700,656,41,9],
  ["Interactive",215,671,42,5],["Matrix",836,654,72,6],["Array",989,741,90,9],["Shell",598,693,34,34],["Hash|Function",743,747,46,3],
  ["Divide|and|Conquer",843,788,49,9],["Binary|Search|Tree",132,733,47,18],["Counting|Sort",217,779,37,21],["Number|Theory",302,725,52,3],
  ["Sliding|Window",416,778,62,2],["Trie",542,772,49,3],["String|Matching",645,777,45,9],["Game|Theory",297,833,42,6],
  ["Monotonic|Stack",499,876,51,3],["Tree",632,903,72,18],["Memoization",754,853,46,5],["Breadth-|First|Search",914,903,72,9],
  ["Binary|Search",206,934,77,9],["Heap|(Priority|Queue)",376,928,67,0],["Simulation",518,1002,66,6],["Backtracking",784,968,58,3],
  ["Counting",318,1061,63,6],["Hash|Table",666,1080,90,9],["Dynamic|Programming",456,1155,90,3]];
document.getElementById("bubbles").innerHTML = topics.map(([label, X, Y, R, H], i) => {
  const x = 52 + X / 3, y = Y / 3 - 6, r = R / 3, h = H / 3, lines = label.split("|");
  const top = y + r - h, w = Math.sqrt(r * r - (r - h) ** 2);
  return `<clipPath id="c${i}"><circle cx="${x}" cy="${y}" r="${r}"/></clipPath>
    <circle cx="${x}" cy="${y}" r="${r - .5}" fill="#ebebeb" stroke="#f1f1f1"/>
    <path fill="#adf0b2" d="M${x - w} ${top}A${r} ${r} 0 0 0 ${x + w} ${top}z"/>
    <g clip-path="url(#c${i})">${lines.map((t, k) => `<text x="${x}" y="${y + 2 + (k - (lines.length - 1) / 2) * 8}">${t}</text>`).join("")}</g>`;
}).join("");
</script>
</body>
</html>
